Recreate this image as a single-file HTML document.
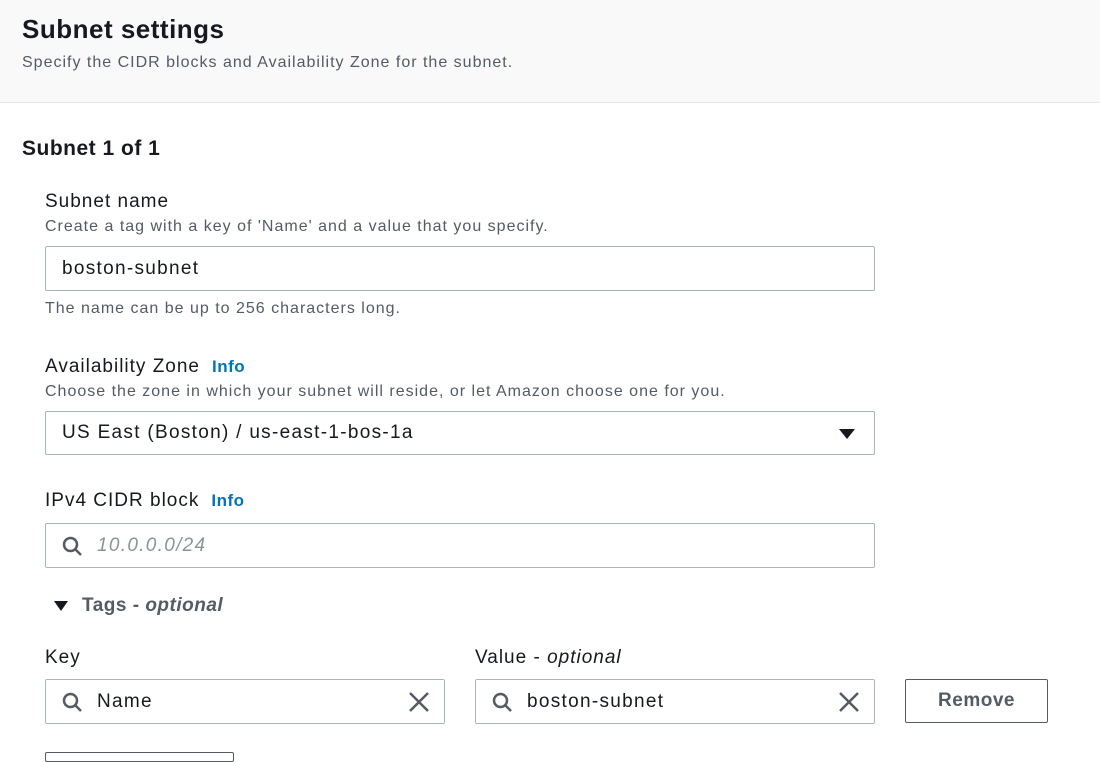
<!DOCTYPE html>
<html><head><style>
*{box-sizing:border-box;margin:0;padding:0}
body{width:1100px;height:755px;overflow:hidden;background:#fff;font-family:"Liberation Sans",sans-serif;color:#16191f;position:relative}
.hdr{position:absolute;left:0;top:0;width:1100px;height:103px;background:#f9f9f9;border-bottom:1px solid #e5e5e5}
.a{position:absolute;white-space:nowrap}
.h1{font-size:26px;font-weight:bold;letter-spacing:0.5px}
.sub{font-size:16px;color:#545b64;letter-spacing:1px}
.lbl{font-size:19px;color:#16191f;letter-spacing:1px}
.desc{font-size:16px;color:#545b64;letter-spacing:1px}
.info{color:#0073bb;font-weight:bold;font-size:17px;margin-left:12px;letter-spacing:0.5px}
.box{position:absolute;border:1px solid #aab7b8;border-radius:2px;background:#fff;font-size:19px;letter-spacing:1.3px;display:flex;align-items:center}
.x{position:absolute;right:14px;top:11px}
</style></head><body>
<div class="hdr"></div>
<div class="a h1" style="left:22px;top:14px">Subnet settings</div>
<div class="a sub" style="left:22px;top:54px">Specify the CIDR blocks and Availability Zone for the subnet.</div>
<div class="a" style="left:22px;top:137px;font-size:21px;font-weight:bold;letter-spacing:0.5px">Subnet 1 of 1</div>

<div class="a lbl" style="left:45px;top:191px">Subnet name</div>
<div class="a desc" style="left:45px;top:218px">Create a tag with a key of 'Name' and a value that you specify.</div>
<div class="box" style="left:45px;top:246px;width:830px;height:45px;padding-left:16px">boston-subnet</div>
<div class="a desc" style="left:45px;top:300px">The name can be up to 256 characters long.</div>

<div class="a lbl" style="left:45px;top:356px">Availability Zone<span class="info">Info</span></div>
<div class="a desc" style="left:45px;top:383px">Choose the zone in which your subnet will reside, or let Amazon choose one for you.</div>
<div class="box" style="left:45px;top:411px;width:830px;height:44px;padding-left:16px">US East (Boston) / us-east-1-bos-1a
<svg style="position:absolute;right:18px;top:16px" width="18" height="12"><path d="M1 1H17L9 11Z" fill="#16191f"/></svg></div>

<div class="a lbl" style="left:45px;top:490px">IPv4 CIDR block<span class="info">Info</span></div>
<div class="box" style="left:45px;top:523px;width:830px;height:45px;padding-left:51px;color:#879596;font-style:italic">10.0.0.0/24
<svg style="position:absolute;left:16px;top:12px" width="22" height="22"><circle cx="8.5" cy="8.5" r="6.5" fill="none" stroke="#545b64" stroke-width="2.5"/><path d="M13 13L19 19" stroke="#545b64" stroke-width="2.5"/></svg></div>

<svg class="a" style="left:53px;top:600px" width="16" height="12"><path d="M1 1H15L8 11Z" fill="#16191f"/></svg>
<div class="a" style="left:82px;top:595px;font-size:19px;font-weight:bold;color:#545b64;letter-spacing:0.5px">Tags - <i>optional</i></div>

<div class="a lbl" style="left:45px;top:647px">Key</div>
<div class="a lbl" style="left:475px;top:647px">Value - <i>optional</i></div>
<div class="box" style="left:45px;top:679px;width:400px;height:45px;padding-left:51px">Name
<svg style="position:absolute;left:16px;top:12px" width="22" height="22"><circle cx="8.5" cy="8.5" r="6.5" fill="none" stroke="#545b64" stroke-width="2.5"/><path d="M13 13L19 19" stroke="#545b64" stroke-width="2.5"/></svg>
<svg class="x" width="22" height="22"><path d="M2 2L20 20M20 2L2 20" stroke="#545b64" stroke-width="2.5"/></svg></div>
<div class="box" style="left:475px;top:679px;width:400px;height:45px;padding-left:51px">boston-subnet
<svg style="position:absolute;left:16px;top:12px" width="22" height="22"><circle cx="8.5" cy="8.5" r="6.5" fill="none" stroke="#545b64" stroke-width="2.5"/><path d="M13 13L19 19" stroke="#545b64" stroke-width="2.5"/></svg>
<svg class="x" width="22" height="22"><path d="M2 2L20 20M20 2L2 20" stroke="#545b64" stroke-width="2.5"/></svg></div>
<div class="a" style="left:905px;top:679px;width:143px;height:44px;border:1px solid #545b64;border-radius:2px;text-align:center;line-height:42px;font-size:19px;font-weight:bold;color:#545b64;letter-spacing:0.5px">Remove</div>
<div class="a" style="left:45px;top:752px;width:189px;height:10px;border:1px solid #545b64;border-radius:2px"></div>
</body></html>
